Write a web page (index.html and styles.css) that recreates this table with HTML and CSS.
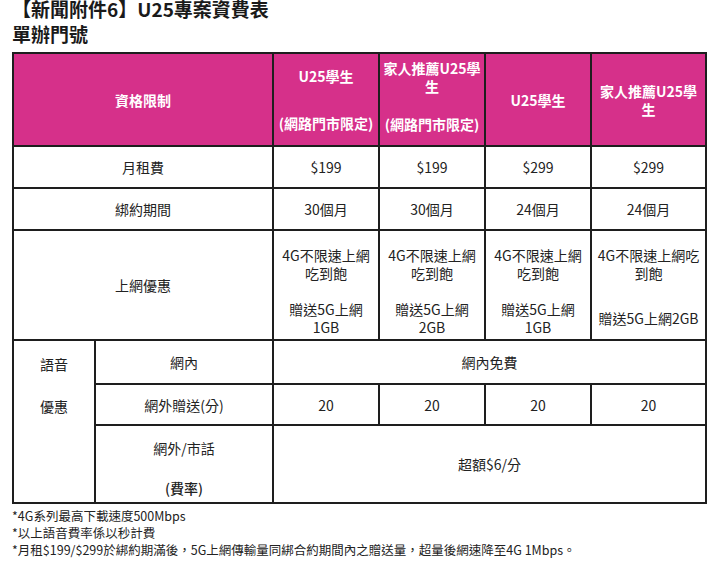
FILE: index.html
```html
<!DOCTYPE html>
<html lang="zh-Hant">
<head>
<meta charset="utf-8">
<title>U25專案資費表</title>
<link rel="stylesheet" href="styles.css">
</head>
<body>
<div class="page">
  <h1 class="title">【新聞附件6】U25專案資費表</h1>
  <h2 class="subtitle">單辦門號</h2>
  <table class="rates">
    <colgroup>
      <col class="c-a"><col class="c-b"><col class="c-n"><col class="c-n"><col class="c-n"><col class="c-f">
    </colgroup>
    <tr class="r-head">
      <th colspan="2">資格限制</th>
      <th><div class="h-gap1">U25學生</div><div>(網路門市限定)</div></th>
      <th class="h-up"><div class="h-gap2">家人推薦U25學<br>生</div><div>(網路門市限定)</div></th>
      <th>U25學生</th>
      <th>家人推薦U25學<br>生</th>
    </tr>
    <tr class="r-43">
      <td colspan="2">月租費</td>
      <td>$199</td><td>$199</td><td>$299</td><td>$299</td>
    </tr>
    <tr class="r-43">
      <td colspan="2">綁約期間</td>
      <td>30個月</td><td>30個月</td><td>24個月</td><td>24個月</td>
    </tr>
    <tr class="r-data">
      <td colspan="2" class="mid">上網優惠</td>
      <td class="top">4G不限速上網<br>吃到飽<br><br>贈送5G上網<br>1GB</td>
      <td class="top">4G不限速上網<br>吃到飽<br><br>贈送5G上網<br>2GB</td>
      <td class="top">4G不限速上網<br>吃到飽<br><br>贈送5G上網<br>1GB</td>
      <td class="top">4G不限速上網吃<br>到飽<div class="f-gap">贈送5G上網2GB</div></td>
    </tr>
    <tr class="r-44">
      <td rowspan="3" class="voice"><div>語音</div><div class="v-gap">優惠</div></td>
      <td>網內</td>
      <td colspan="4">網內免費</td>
    </tr>
    <tr class="r-42">
      <td>網外贈送(分)</td>
      <td>20</td><td>20</td><td>20</td><td>20</td>
    </tr>
    <tr class="r-76">
      <td class="rate"><div>網外/市話</div><div class="rate-b">(費率)</div></td>
      <td colspan="4">超額$6/分</td>
    </tr>
  </table>
  <div class="notes">
    <p>*4G系列最高下載速度500Mbps</p>
    <p>*以上語音費率係以秒計費</p>
    <p>*月租$199/$299於綁約期滿後，5G上網傳輸量同綁合約期間內之贈送量，超量後網速降至4G 1Mbps。</p>
  </div>
</div>
</body>
</html>
```

FILE: styles.css
```css
html, body {
  margin: 0;
  padding: 0;
  background: #ffffff;
}
body {
  font-family: "Noto Sans CJK TC", "Noto Sans", sans-serif;
  color: #222222;
}
.page {
  width: 720px;
  height: 582px;
  overflow: hidden;
}
.title, .subtitle {
  margin: 0;
  padding-left: 12px;
  font-size: 19px;
  font-weight: 700;
  color: #1a1a1a;
}
.title {
  line-height: 17px;
}
.subtitle {
  line-height: 33px;
}
.rates {
  margin: 2px 0 0 12px;
  width: 693px;
  table-layout: fixed;
  border-collapse: collapse;
  font-size: 14px;
  line-height: 18px;
}
.c-a { width: 82px; }
.c-b { width: 178px; }
.c-n { width: 106px; }
.c-f { width: 115px; }
.rates th, .rates td {
  border: 2px solid #1e1e1e;
  padding: 0 4px;
  text-align: center;
  vertical-align: middle;
}
.rates th {
  background: #d6308a;
  color: #ffffff;
  font-weight: 700;
  padding: 0 1px;
  white-space: nowrap;
}
.r-head th { height: 91px; }
.rates th.h-up {
  padding-bottom: 7px;
  height: 84px;
}
.h-gap1 { margin-bottom: 29px; }
.h-gap2 { margin-bottom: 20px; }
.r-43 td { height: 40px; }
.r-data td.mid { height: 108px; }
.rates td.top {
  vertical-align: top;
  padding-top: 15px;
}
.f-gap { margin-top: 27px; }
.r-44 td { height: 42px; }
.r-42 td { height: 39px; }
.r-76 td { height: 76px; }
.rates td.voice {
  vertical-align: top;
  padding-top: 14px;
}
.v-gap { margin-top: 24px; }
.rates td.rate {
  padding-top: 8px;
  height: 68px;
}
.rate-b {
  margin-top: 22px;
  font-weight: 500;
}
.notes {
  margin-top: 3px;
  padding-left: 12px;
  font-size: 12.5px;
  line-height: 17px;
}
.notes p { margin: 0; }
```
